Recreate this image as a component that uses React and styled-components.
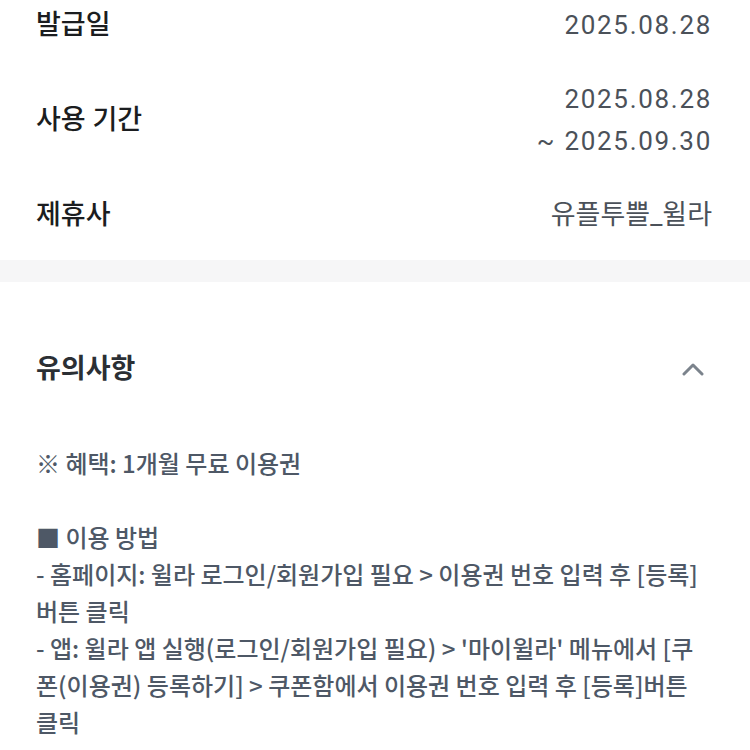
import React from "react";
import styled, { createGlobalStyle } from "styled-components";

const Global = createGlobalStyle`
  html, body { margin: 0; padding: 0; background: #ffffff; }
  body {
    font-family: Roboto, "Noto Sans CJK KR", "Noto Sans", sans-serif;
    -webkit-font-smoothing: antialiased;
  }
`;

const Page = styled.div`
  width: 750px;
  background: #ffffff;
`;

const InfoList = styled.dl`
  margin: 0;
  padding: 4px 38px 24px 36px;
  display: flex;
  flex-direction: column;
  gap: 32px;
`;

const InfoRow = styled.div`
  display: flex;
  justify-content: space-between;
  align-items: center;
`;

const Label = styled.dt`
  font-size: 27px;
  line-height: 42px;
  font-weight: 500;
  color: #1b1d20;
`;

const Value = styled.dd`
  margin: 0;
  text-align: right;
  font-size: ${(p) => (p.$numeric ? "26px" : "27px")};
  line-height: 42px;
  letter-spacing: ${(p) => (p.$numeric ? "1.7px" : "0")};
  color: #4b5159;
`;

const Divider = styled.div`
  height: 22px;
  background: #f6f6f7;
`;

const Notice = styled.section`
  padding: 67px 38px 40px 36px;
`;

const NoticeHeader = styled.div`
  display: flex;
  justify-content: space-between;
  align-items: center;
`;

const NoticeTitle = styled.h2`
  margin: 0;
  font-size: 27px;
  line-height: 40px;
  font-weight: 700;
  color: #2b2f34;
`;

const ToggleButton = styled.button`
  border: 0;
  background: none;
  padding: 0;
  margin-right: 8px;
  display: flex;
  align-items: center;
  cursor: pointer;
`;

const NoticeBody = styled.p`
  margin: 55px 0 0;
  white-space: pre-wrap;
  font-family: "Noto Sans CJK KR", Roboto, sans-serif;
  font-size: 24px;
  font-weight: 500;
  line-height: 37px;
  color: #4e5866;
`;

const rows = [
  { label: "발급일", value: ["2025.08.28"], numeric: true },
  { label: "사용 기간", value: ["2025.08.28", "~ 2025.09.30"], numeric: true },
  { label: "제휴사", value: ["유플투쁠_윌라"], numeric: false },
];

const notice = `※ 혜택: 1개월 무료 이용권

■ 이용 방법
- 홈페이지: 윌라 로그인/회원가입 필요 > 이용권 번호 입력 후 [등록]버튼 클릭
- 앱: 윌라 앱 실행(로그인/회원가입 필요) > '마이윌라' 메뉴에서 [쿠폰(이용권) 등록하기] > 쿠폰함에서 이용권 번호 입력 후 [등록]버튼 클릭`;

function ChevronUp() {
  return (
    <svg width="22" height="14" viewBox="0 0 22 14" fill="none">
      <path
        d="M2 12 L11 3 L20 12"
        stroke="#7b838c"
        strokeWidth="3"
        strokeLinecap="round"
        strokeLinejoin="round"
      />
    </svg>
  );
}

export default function App() {
  return (
    <Page>
      <Global />
      <InfoList>
        {rows.map((r) => (
          <InfoRow key={r.label}>
            <Label>{r.label}</Label>
            <Value $numeric={r.numeric}>
              {r.value.map((v, i) => (
                <div key={i}>{v}</div>
              ))}
            </Value>
          </InfoRow>
        ))}
      </InfoList>
      <Divider />
      <Notice>
        <NoticeHeader>
          <NoticeTitle>유의사항</NoticeTitle>
          <ToggleButton aria-label="접기">
            <ChevronUp />
          </ToggleButton>
        </NoticeHeader>
        <NoticeBody>{notice}</NoticeBody>
      </Notice>
    </Page>
  );
}
